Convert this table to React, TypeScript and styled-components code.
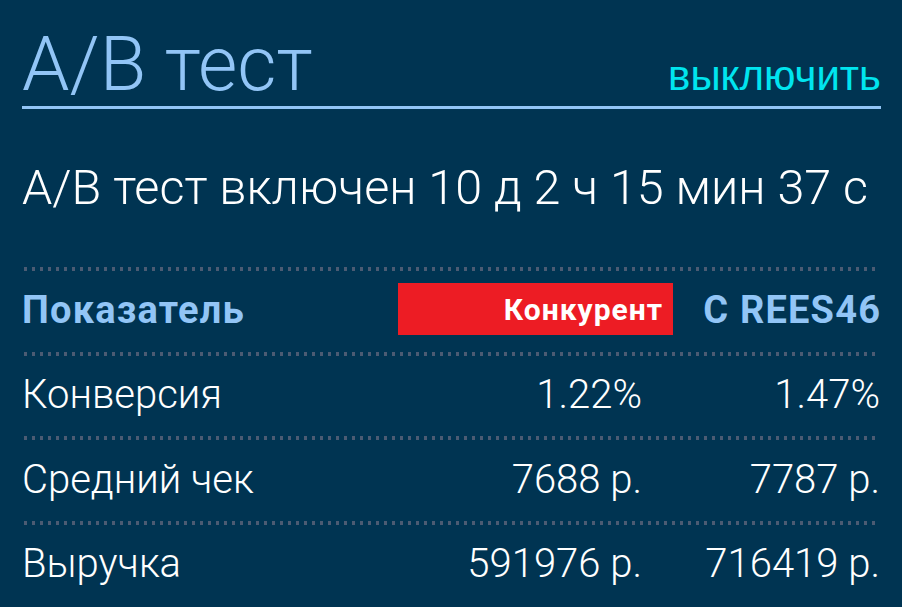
import { ReactElement } from 'react';
import styled, { createGlobalStyle } from 'styled-components';

interface IMetricRow {
  title: string;
  competitor: string;
  rees: string;
}

const rows: IMetricRow[] = [
  { title: 'Конверсия', competitor: '1.22%', rees: '1.47%' },
  { title: 'Средний чек', competitor: '7688 р.', rees: '7787 р.' },
  { title: 'Выручка', competitor: '591976 р.', rees: '716419 р.' },
];

const GlobalStyle = createGlobalStyle`
  html, body {
    margin: 0;
    padding: 0;
    background: #003452;
  }
  body {
    font-family: Roboto, 'Noto Sans', sans-serif;
  }
`;

export default function App(): ReactElement {
  return (
    <Page>
      <GlobalStyle />
      <Header>
        <Title>A/B тест</Title>
        <SwitchOff href="#">выключить</SwitchOff>
      </Header>
      <Status>A/B тест включен 10 д 2 ч 15 мин 37 с</Status>
      <Table>
        <Row>
          <HeadCell>Показатель</HeadCell>
          <CompetitorHead>
            <CompetitorLabel>Конкурент</CompetitorLabel>
          </CompetitorHead>
          <HeadCell $align="right">C REES46</HeadCell>
        </Row>
        {rows.map((row) => (
          <Row key={row.title}>
            <Cell>{row.title}</Cell>
            <Cell $align="right" $padRight={31}>
              {row.competitor}
            </Cell>
            <Cell $align="right">{row.rees}</Cell>
          </Row>
        ))}
      </Table>
    </Page>
  );
}

const Page = styled.div`
  width: 902px;
  height: 607px;
  box-sizing: border-box;
  padding: 26px 21px 0 22px;
  background: #003452;
  overflow: hidden;
`;

const Header = styled.div`
  display: flex;
  justify-content: space-between;
  align-items: baseline;
  padding-bottom: 4px;
  border-bottom: 3px solid #92c5f6;
`;

const Title = styled.h1`
  margin: 0;
  font-family: Roboto, sans-serif;
  font-weight: 300;
  font-size: 76px;
  line-height: 1;
  color: #92c5f6;
`;

const SwitchOff = styled.a`
  font-family: 'Liberation Sans', Arial, sans-serif;
  font-size: 42px;
  color: #00e5ef;
  text-decoration: none;
`;

const Status = styled.p`
  margin: 51px 0;
  font-family: Roboto, sans-serif;
  font-weight: 300;
  font-size: 48.5px;
  line-height: 56px;
  color: #ffffff;
`;

const Table = styled.div`
  display: flex;
  flex-direction: column;
  margin-right: 1px;
`;

const Row = styled.div`
  display: grid;
  grid-template-columns: 1fr 275px 207px;
  align-items: center;
  height: 84.5px;
  box-sizing: border-box;
  padding-top: 4px;
  background: repeating-linear-gradient(
      90deg,
      transparent 0 2px,
      #4b5b73 2px 5px,
      transparent 5px 8px
    )
    top left / 100% 4px no-repeat;
`;

const HeadCell = styled.div<{ $align?: 'left' | 'right' }>`
  font-family: Roboto, sans-serif;
  font-weight: 700;
  font-size: 38px;
  letter-spacing: 1.2px;
  color: #92c5f6;
  text-align: ${(p) => p.$align ?? 'left'};
  margin-right: ${(p) => (p.$align === 'right' ? '-1.2px' : '0')};
  padding-bottom: 2px;
`;

const CompetitorHead = styled.div`
  display: flex;
  align-items: center;
  justify-content: flex-end;
  height: 52px;
  margin-top: -4px;
  padding-right: 11px;
  background: #ed1c24;
`;

const CompetitorLabel = styled.span`
  font-family: Roboto, sans-serif;
  font-weight: 700;
  font-size: 30px;
  letter-spacing: 1px;
  margin-right: -1px;
  color: #ffffff;
`;

const Cell = styled.div<{ $align?: 'left' | 'right'; $padRight?: number }>`
  font-family: Roboto, sans-serif;
  font-weight: 300;
  font-size: 40px;
  color: #ffffff;
  text-align: ${(p) => p.$align ?? 'left'};
  padding-right: ${(p) => p.$padRight ?? 0}px;
  padding-bottom: 2px;
`;
